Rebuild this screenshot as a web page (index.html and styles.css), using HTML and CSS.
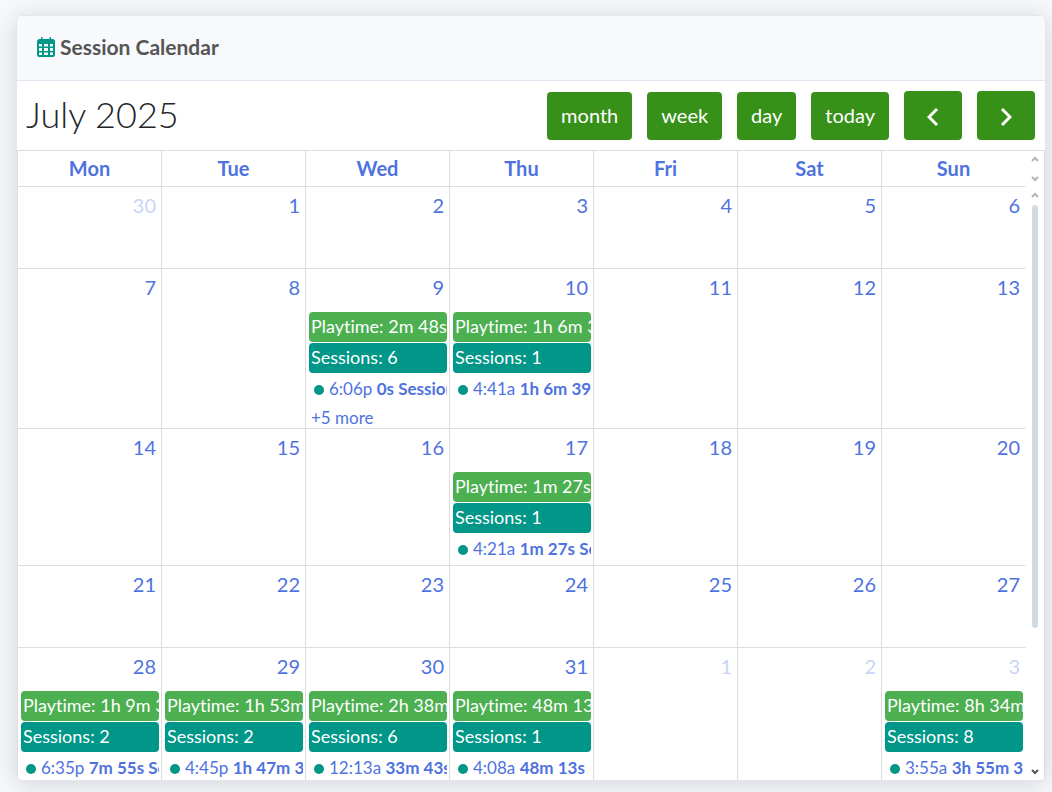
FILE: index.html
```
<!DOCTYPE html>
<html lang="en">
<head>
  <meta charset="UTF-8" />
  <meta name="viewport" content="width=device-width, initial-scale=1.0"/>
  <title>Session Calendar</title>
  <link rel="stylesheet" href="styles.css">
</head>
<body>

<div class="card">
  <div class="card-header">
    <svg class="card-icon" viewBox="0 0 18 20" aria-hidden="true">
      <path fill="#009688" fill-rule="evenodd" d="M4 0h1.500v2h7V0H14v2h1.500A2.500 2.500 0 0 1 18 4.500v13a2.500 2.500 0 0 1-2.500 2.500h-13A2.500 2.500 0 0 1 0 17.500v-13A2.500 2.500 0 0 1 2.500 2H4zM2 7v2.500h3V7zm5 0v2.500h4V7zm6 0v2.500h3V7zM2 11v3h3v-3zm5 0v3h4v-3zm6 0v3h3v-3zM2 15.500V18h3v-2.500zm5 0V18h4v-2.500zm6 0V18h3v-2.500z"/>
    </svg>
    <h6>Session Calendar</h6>
  </div>

  <!-- Toolbar -->
  <div class="toolbar">
    <h2>July 2025</h2>
    <div class="toolbar-buttons">
      <button type="button">month</button>
      <button type="button">week</button>
      <button type="button">day</button>
      <button type="button">today</button>
      <button type="button" class="nav" aria-label="Previous">
        <svg viewBox="0 0 12 20"><path d="M10 2 2 10l8 8"/></svg>
      </button>
      <button type="button" class="nav" aria-label="Next">
        <svg viewBox="0 0 12 20"><path d="M2 2l8 8-8 8"/></svg>
      </button>
    </div>
  </div>

  <!-- Month view -->
  <div class="view">
    <div class="month-wrap">
      <table class="month">
        <thead>
          <tr><th>Mon</th><th>Tue</th><th>Wed</th><th>Thu</th><th>Fri</th><th>Sat</th><th>Sun</th></tr>
        </thead>
        <tbody id="weeks"></tbody>
      </table>
    </div>

    <div class="gutter">
      <div class="head-scroll">
        <svg viewBox="0 0 8 6"><path d="M1 5l3-3 3 3"/></svg>
        <svg viewBox="0 0 8 6"><path d="M1 1l3 3 3-3"/></svg>
      </div>
      <div class="body-scroll">
        <svg viewBox="0 0 8 6"><path d="M1 5l3-3 3 3"/></svg>
        <div class="track"><div class="thumb"></div></div>
        <svg class="dark" viewBox="0 0 8 6"><path d="M1 1l3 3 3-3"/></svg>
      </div>
    </div>
  </div>
</div>

<script src="calendar.js"></script>
</body>
</html>
```
FILE: styles.css
```
* {
  box-sizing: border-box;
}

body {
  margin: 0;
  padding: 15px 6px 11px 16px;
  height: 100vh;
  display: flex;
  background-color: #f8f9fc;
  font-family: Lato, "Noto Sans", sans-serif;
  font-size: 18px;
  font-variant-ligatures: none;
  color: #212529;
}

h2, h6 {
  margin: 0;
}

.card {
  flex: 1;
  min-width: 0;
  display: flex;
  flex-direction: column;
  overflow: hidden;
  border: 1px solid #e3e6f0;
  border-radius: 6px;
  background-color: #fff;
  box-shadow: 0 3px 28px rgba(58, 59, 69, 0.2);
}

.card-header {
  display: flex;
  align-items: center;
  gap: 5px;
  height: 65px;
  padding: 0 20px 2px;
  border-bottom: 1px solid #e3e6f0;
  background-color: #f8f9fc;
}

.card-header h6 {
  padding-bottom: 2px;
  font-size: 21px;
  font-weight: bold;
  color: #555;
}

.card-icon {
  width: 18px;
  height: 20px;
}

/* Toolbar */
.toolbar {
  display: flex;
  align-items: center;
  justify-content: space-between;
  height: 69px;
  padding: 0 10px 0 9px;
}

.toolbar h2 {
  padding-bottom: 4px;
  font-size: 36px;
  font-weight: 300;
}

.toolbar-buttons {
  display: flex;
  align-items: flex-end;
  gap: 15px;
}

.toolbar button {
  height: 48px;
  padding: 0 14px 3px;
  border: none;
  border-radius: 4px;
  background-color: #379018;
  color: #fff;
  font-family: inherit;
  font-size: 20px;
  cursor: pointer;
}

.toolbar .nav {
  display: flex;
  align-items: center;
  justify-content: center;
  width: 58px;
  height: 49px;
  padding: 2px 0 0;
}

.nav svg {
  width: 12px;
  height: 20px;
  fill: none;
  stroke: #fff;
  stroke-width: 3;
}

/* Month grid */
.view {
  flex: 1;
  min-height: 0;
  display: flex;
  overflow: hidden;
  border: 1px solid #ddd;
  border-bottom: none;
}

.month-wrap {
  flex: 1;
  min-width: 0;
}

.month {
  width: 100%;
  table-layout: fixed;
  border-collapse: separate;
  border-spacing: 0;
  color: #4e73df;
}

.month th,
.month td {
  border-right: 1px solid #ddd;
  border-bottom: 1px solid #ddd;
}

.month th:last-child,
.month td:last-child {
  border-right-color: transparent;
}

.month th {
  height: 36px;
  padding: 0 0 2px;
  font-size: 20px;
}

.month td {
  height: 82px;
  padding: 0 2px 0 3px;
  vertical-align: top;
}

.day {
  height: 43px;
  padding: 6px 3px 0 0;
  font-size: 20px;
  line-height: 24px;
  text-align: right;
}

.other .day {
  opacity: 0.3;
}

.event {
  height: 30px;
  margin-bottom: 1px;
  padding: 0 2px;
  border-radius: 4px;
  background-color: #009688;
  color: #fff;
  line-height: 28px;
  white-space: nowrap;
  overflow: hidden;
}

.playtime {
  background-color: #4caf50;
}

.session {
  display: flex;
  align-items: center;
  gap: 5px;
  height: 31px;
  padding-left: 5px;
  font-size: 17px;
  line-height: 22px;
  white-space: nowrap;
  overflow: hidden;
}

.session span {
  padding-bottom: 2px;
}

.session::before {
  content: "";
  flex: none;
  width: 10px;
  height: 10px;
  border-radius: 50%;
  background-color: #009688;
}

.more {
  display: block;
  height: 23px;
  padding-left: 2px;
  font-size: 17px;
  line-height: 25px;
  color: inherit;
  text-decoration: none;
}

/* Scrollbars */
.gutter {
  display: flex;
  flex-direction: column;
  width: 18px;
}

.gutter svg {
  flex: none;
  width: 8px;
  height: 6px;
  fill: none;
  stroke: #b5b5b5;
  stroke-width: 2;
}

.gutter .dark {
  stroke: #555;
}

.head-scroll,
.body-scroll {
  display: flex;
  flex-direction: column;
  align-items: center;
  justify-content: space-between;
  padding: 5px 0;
}

.head-scroll {
  height: 36px;
}

.body-scroll {
  flex: 1;
}

.track {
  flex: 1;
  width: 6px;
  padding: 7px 0;
}

.thumb {
  height: 76%;
  border-radius: 3px;
  background-color: #cfdce6;
}
```
FILE: calendar.js
```
// first visible day is Monday, June 30
const start = new Date(2025, 5, 30);

const events = {
  "6-9": { playtime: "2m 48s", sessions: 6, time: "6:06p", title: "0s Session", more: 5 },
  "6-10": { playtime: "1h 6m 39s", sessions: 1, time: "4:41a", title: "1h 6m 39s" },
  "6-17": { playtime: "1m 27s", sessions: 1, time: "4:21a", title: "1m 27s Session" },
  "6-28": { playtime: "1h 9m 38s", sessions: 2, time: "6:35p", title: "7m 55s Session" },
  "6-29": { playtime: "1h 53m", sessions: 2, time: "4:45p", title: "1h 47m 3s" },
  "6-30": { playtime: "2h 38m", sessions: 6, time: "12:13a", title: "33m 43s" },
  "6-31": { playtime: "48m 13s", sessions: 1, time: "4:08a", title: "48m 13s" },
  "7-3": { playtime: "8h 34m", sessions: 8, time: "3:55a", title: "3h 55m 3s" }
};

let html = "";
for (let i = 0; i < 35; i++) {
  const date = new Date(start.getFullYear(), start.getMonth(), start.getDate() + i);
  const event = events[date.getMonth() + "-" + date.getDate()];

  if (i % 7 === 0) html += "<tr>";
  html += `<td class="${date.getMonth() === 6 ? "" : "other"}"><div class="day">${date.getDate()}</div>`;
  if (event) {
    html += `<div class="event playtime">Playtime: ${event.playtime}</div>`;
    html += `<div class="event">Sessions: ${event.sessions}</div>`;
    html += `<div class="session"><span>${event.time} <b>${event.title}</b></span></div>`;
    if (event.more) html += `<a class="more" href="#">+${event.more} more</a>`;
  }
  html += "</td>";
  if (i % 7 === 6) html += "</tr>";
}
document.getElementById("weeks").innerHTML = html;
```
